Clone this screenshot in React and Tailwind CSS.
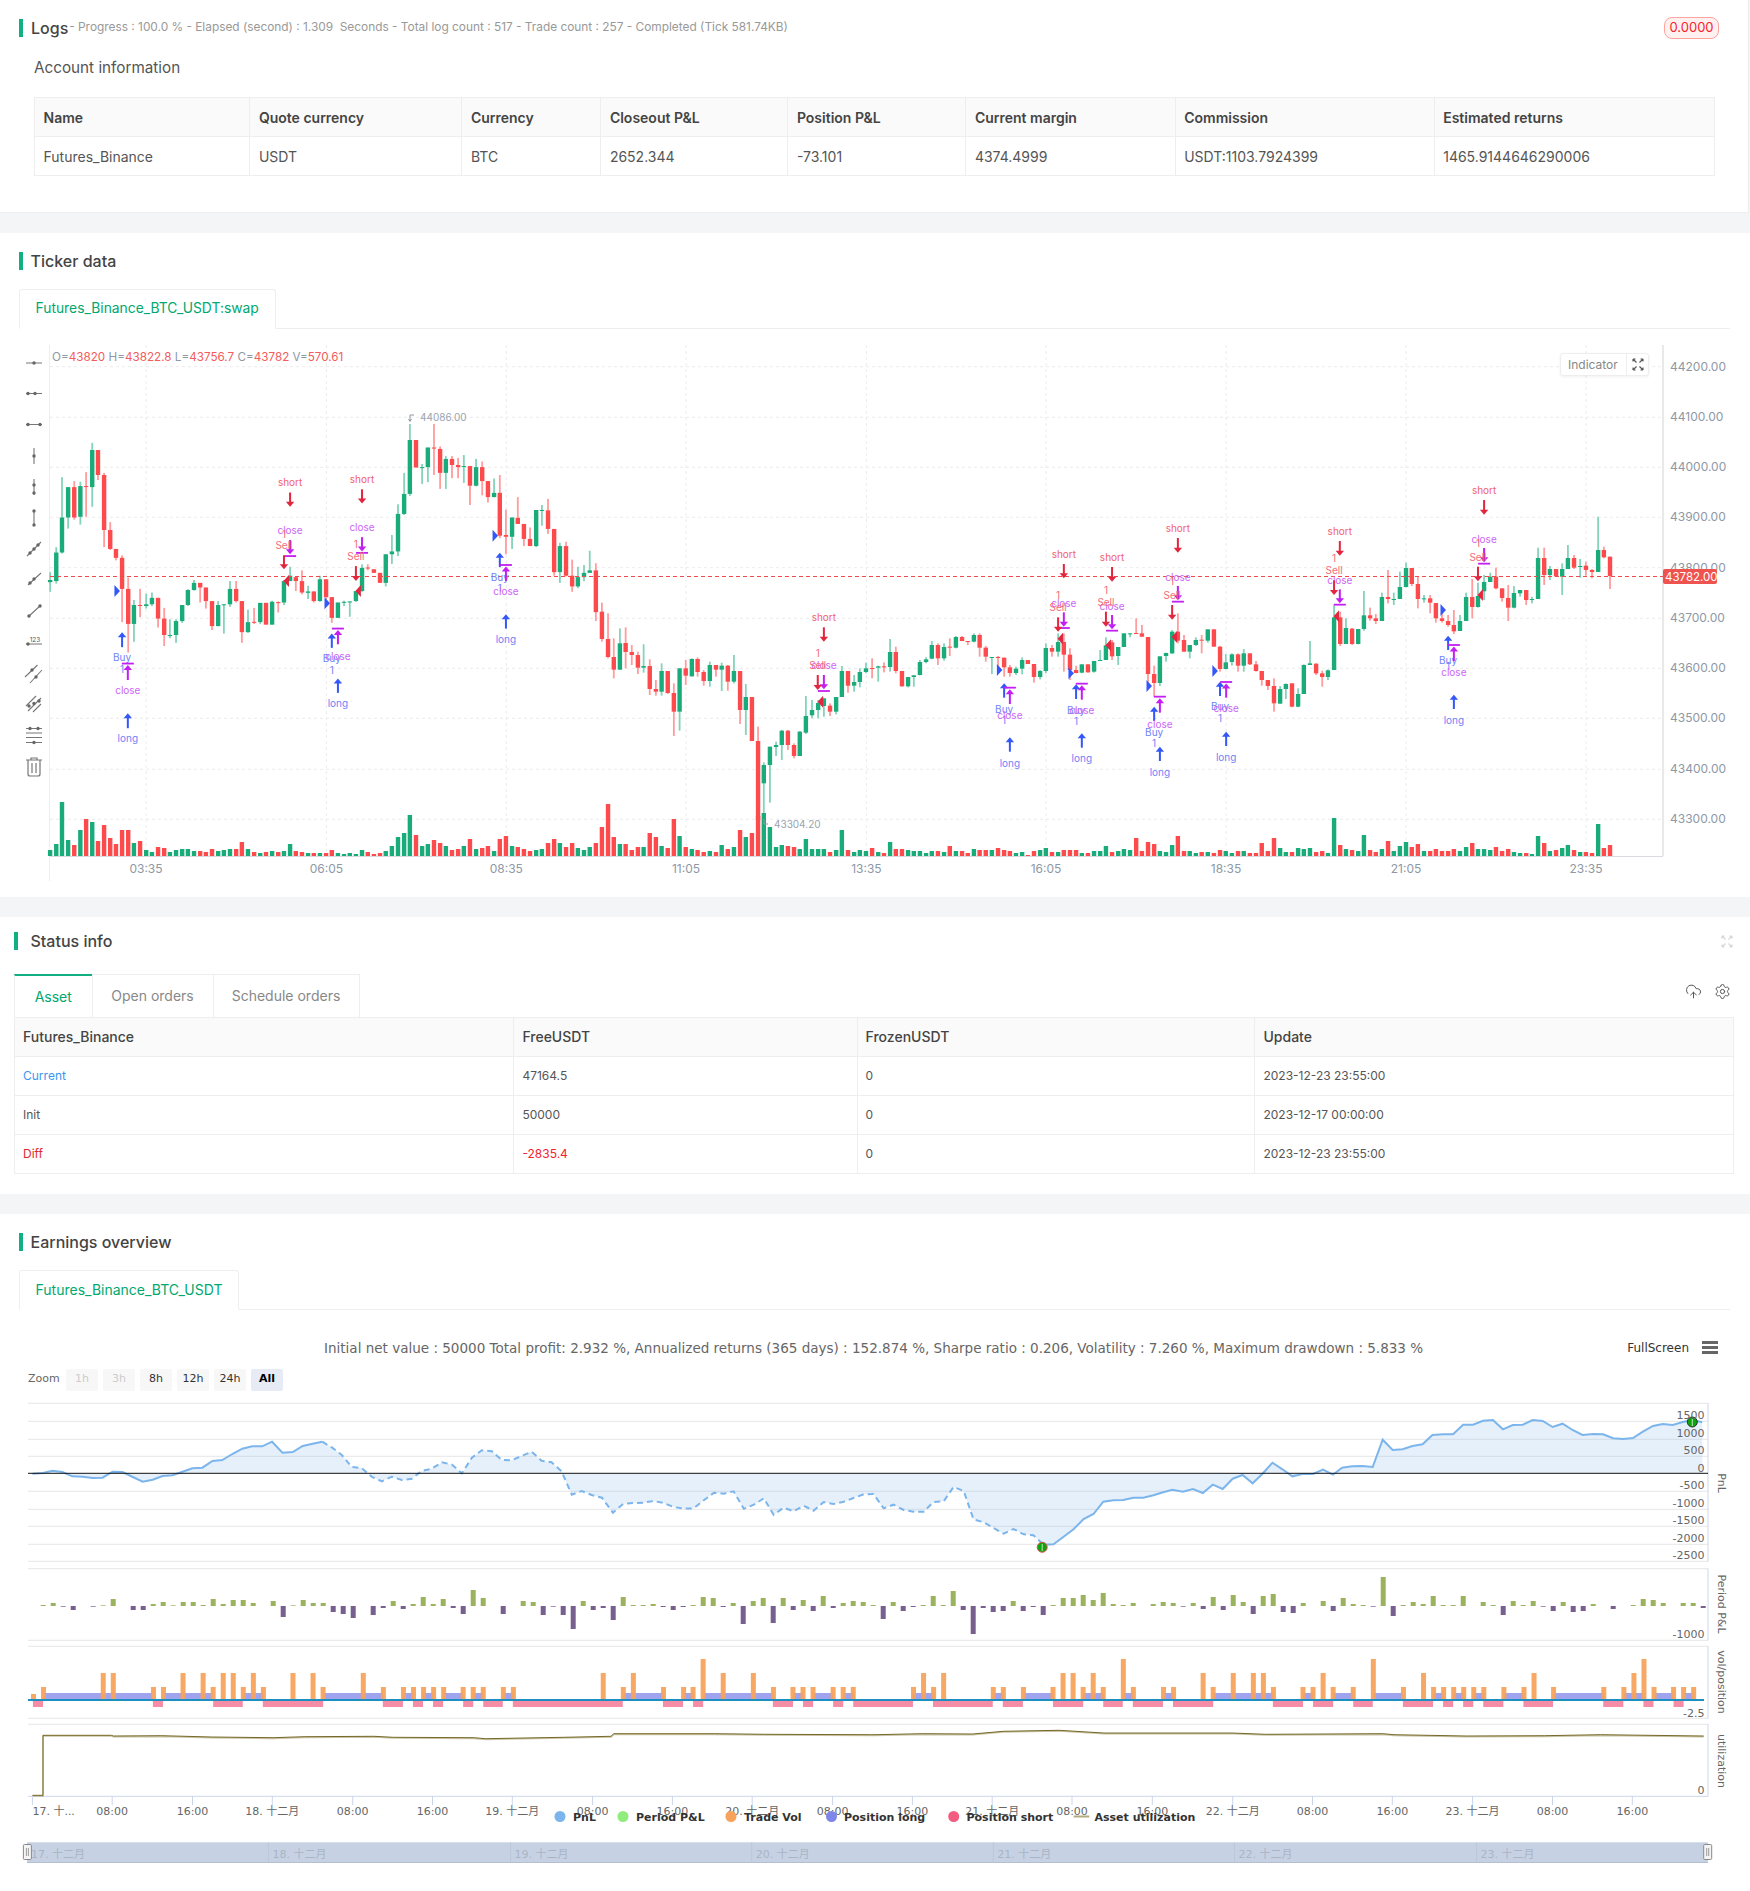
import React from 'react'
import { CloudUpload, Settings } from 'lucide-react'

// candle rows: zoomX color bodyTop bodyBottom wickTop wickBottom volumeHeight
const SEG_A = `131 g 672 678 650 705 6;147 g 595 675 580 682 12;162 g 497 595 384 598 54;178 g 412 497 412 528 16;194 r 412 497 395 503 11;210 g 409 495 397 517 26;225 r 409 411 370 495 37;241 g 308 412 288 467 34;256 r 308 378 308 392 15;272 r 378 532 372 580 31;288 r 532 585 510 588 18;303 r 585 610 585 617 12;319 r 610 697 603 790 26;335 r 697 795 665 875 26;350 g 742 795 728 845 13;366 r 742 744 697 776 15;382 g 740 745 710 752 6;397 g 722 740 707 745 4;413 r 722 780 722 805 9;429 r 780 826 750 857 8;444 g 826 829 782 835 4;460 g 787 826 782 848 6;476 g 742 787 742 792 7;491 g 700 742 698 745 7;507 g 680 700 672 702 5;523 r 680 693 680 735 5;538 r 693 731 693 752 4;554 r 731 801 731 812 7;570 g 742 801 731 802 5;585 g 740 742 740 822 6;601 g 697 740 675 747 7;617 r 697 731 675 735 7;632 r 731 818 731 848 14;648 g 790 818 755 820 7;664 r 789 791 750 795 4;680 g 736 790 736 795 3;695 r 736 797 736 797 4;711 g 733 797 730 797 5;727 r 734 736 732 763 4;742 g 675 735 672 742 5;758 g 660 675 635 675 12;773 r 664 675 664 703 5;789 r 675 707 645 712 4;805 g 704 708 688 725 3;820 r 704 731 704 735 3;836 g 670 731 660 733 3;852 r 670 720 670 745 3;867 r 720 778 720 792 6;883 g 735 778 735 778 3;899 g 733 735 730 745 2;914 g 732 734 732 775 3;930 g 703 731 703 733 2;946 g 638 703 628 705 6;961 r 637 639 628 645 4;977 r 642 652 642 652 2;993 r 652 680 652 680 3;1008 g 600 680 600 690 5;1024 g 592 600 546 627 10;1040 g 487 592 460 605 19;1056 g 431 487 372 490 23;1071 g 280 431 235 437 41;1087 r 280 357 280 357 21;1103 g 356 358 347 403 10;1118 g 301 356 301 398 12;1134 r 301 304 235 378 16;1150 r 305 372 298 417 13;1165 g 333 372 325 417 10;1181 r 333 350 325 387 6;1197 r 350 356 330 387 7;1212 g 353 355 322 400 10;1228 r 353 408 353 462 17;1244 g 356 408 333 410 7;1260 r 356 395 340 435 8;1275 r 395 440 395 455 10;1291 g 428 440 388 440 5;1306 r 428 548 378 555 17;1322 r 546 551 475 600 20;1338 g 497 551 497 585 10;1353 r 498 515 440 515 9;1369 r 515 557 515 577 7;1385 r 557 577 525 577 5;1401 g 476 577 476 580 6;1416 g 476 478 462 520 7;1432 r 477 529 445 543 13;1448 r 529 650 529 660 17;1463 g 577 650 568 680 13;1479 r 577 660 565 662 9;1495 r 660 690 615 705 13;1510 g 664 690 635 695 8;1526 g 652 664 630 675 6;1541 g 645 652 590 652 9;1557 r 645 762 625 787 13`

const SEG_B = `5 r 635 717 608 725 29;21 r 717 771 640 775 52;36 r 771 809 715 835 19;52 g 730 809 685 810 12;67 r 729 756 682 805 12;83 r 756 765 735 795 6;99 r 765 803 755 822 9;114 g 798 803 733 818 9;130 r 798 867 778 885 23;146 r 867 875 840 887 19;161 g 813 875 790 887 10;177 r 813 879 813 882 8;193 r 879 935 850 1008 37;208 g 805 935 805 992 20;224 r 805 827 780 855 9;240 g 777 829 775 830 7;255 r 777 816 772 830 6;271 r 816 843 810 857 4;287 g 795 843 785 860 5;303 r 795 809 795 830 4;318 g 797 809 788 873 11;334 r 797 845 795 872 7;350 g 813 845 765 850 9;366 r 813 930 813 972 26;381 g 891 930 852 1005 19;397 r 891 1023 891 1023 23;413 r 1023 1260 980 1262 40;428 g 1095 1150 1087 1240 43;444 g 1040 1095 1040 1208 29;460 g 1035 1041 1025 1068 9;475 g 992 1035 990 1080 11;491 r 992 1035 990 1050 10;507 r 1035 1068 1030 1075 9;522 g 995 1068 993 1068 7;538 g 948 998 888 1002 17;554 g 930 946 900 955 7;570 g 909 930 900 955 7;585 g 895 918 895 950 7;601 r 917 935 910 948 4;617 g 891 935 891 943 6;632 g 813 891 798 891 26;648 r 813 857 813 878 6;664 g 846 857 825 875 4;679 g 816 846 805 862 6;695 g 805 816 788 820 5;711 r 804 806 775 835 8;727 g 799 803 797 845 4;742 r 799 802 787 817 3;758 g 756 801 717 815 14;773 r 756 813 740 820 7;789 r 813 859 813 860 7;805 g 831 859 831 862 6;820 g 826 831 826 860 5;836 g 786 825 780 826 5;852 g 778 786 772 790 3;867 g 735 776 723 778 5;883 r 735 775 730 795 5;899 g 741 775 730 782 4;914 r 740 742 715 768 10;930 g 711 743 708 745 5;946 r 711 723 708 723 5;961 r 723 725 723 735 3;977 g 705 725 700 727 7;992 r 705 743 700 770 6;1008 r 743 770 738 785 6;1024 g 771 773 771 822 6;1040 r 771 773 768 805 8;1056 r 773 802 773 830 6;1071 r 802 819 795 830 5;1087 g 806 819 800 825 3;1103 g 780 806 772 823 4;1118 r 780 792 780 792 1;1134 r 792 831 792 848 5;1150 g 813 831 810 838 6;1165 g 744 813 730 820 8;1181 r 744 755 735 770 4;1197 g 726 755 700 770 4;1212 r 726 764 700 815 6;1228 r 764 810 745 840 6;1244 r 810 819 797 820 6;1259 g 793 818 793 820 3;1275 r 793 817 793 818 3;1291 g 783 815 783 818 5;1307 g 780 782 750 783 5;1322 g 736 780 712 780 10;1338 r 727 769 720 780 4;1354 g 741 768 741 795 5;1369 g 700 741 700 741 7;1385 g 700 702 700 712 6;1401 r 699 701 655 702 18;1416 r 700 710 675 710 5;1432 r 711 822 711 852 14;1448 r 822 849 797 890 12;1463 g 769 849 769 858 5;1479 g 759 768 758 785 4;1495 g 695 760 690 762 11;1510 r 695 722 640 730 20;1526 r 720 755 705 755 5;1541 g 735 755 735 775 5;1557 g 720 735 712 738 3`

const SEG_C = `135 r 719 721 705 760 4;151 g 688 722 688 728 4;167 r 688 740 688 740 3;183 r 740 807 738 815 6;198 g 787 807 762 808 5;214 g 763 786 760 797 3;230 r 763 797 760 815 5;245 g 760 797 747 815 5;261 r 760 793 760 795 3;277 r 793 813 783 815 3;292 r 813 840 813 857 13;308 r 840 858 840 870 5;324 r 858 910 835 935 18;340 g 867 911 858 911 8;355 g 852 867 850 897 4;371 r 850 920 850 922 4;387 g 882 920 865 922 8;402 g 795 882 793 882 7;418 g 790 795 723 795 8;434 r 791 820 790 825 4;450 r 820 831 812 860 5;465 g 811 831 808 840 3;481 g 652 810 615 810 38;497 r 652 732 635 738 11;512 g 684 732 655 732 7;528 r 686 732 684 735 6;544 g 687 732 687 733 5;559 g 646 687 573 692 21;575 r 646 655 623 662 6;590 r 655 663 642 672 4;606 g 591 663 578 663 7;622 r 591 597 510 610 15;637 g 597 599 578 615 5;653 g 561 597 515 597 10;669 g 504 561 488 562 14;684 r 504 552 504 558 9;700 r 552 597 530 625 12;716 g 595 597 585 608 5;732 r 595 608 585 640 5;747 r 609 655 609 668 7;763 r 655 663 632 668 5;779 r 663 675 645 680 5;794 r 675 694 630 702 7;810 g 663 693 645 693 5;826 g 591 663 578 663 9;842 r 591 621 537 655 13;857 g 588 621 548 623 7;873 g 546 574 525 600 7;889 g 530 546 518 546 6;904 r 530 565 503 568 9;920 r 565 594 565 605 5;936 r 594 623 555 663 7;951 g 579 623 558 625 4;967 g 570 580 570 590 3;983 r 570 600 570 615 3;998 g 597 599 590 610 2;1014 g 474 597 443 597 20;1030 r 474 525 443 555 13;1045 g 507 525 498 540 5;1061 r 507 529 507 530 6;1077 g 507 530 490 585 8;1092 g 474 507 435 507 11;1108 r 474 503 465 507 6;1124 g 498 500 477 533 4;1139 r 497 510 485 527 4;1155 r 510 516 507 535 3;1171 g 450 516 350 516 32;1186 r 450 472 440 475 8;1202 r 470 528 470 567 11`

const SCALES = {
  a: { ox: 0, sx: 2.613, oy: 340, sy: 2.8 },
  b: { ox: 600, sx: 2.613, oy: 400, sy: 3 },
  c: { ox: 1150, sx: 2.613, oy: 400, sy: 3 },
}
const px = (s, x) => SCALES[s].ox + x / SCALES[s].sx
const py = (s, y) => SCALES[s].oy + y / SCALES[s].sy

const parseCandles = (s, text) =>
  text.split(';').map((row) => {
    const p = row.trim().split(' ')
    return {
      x: px(s, +p[0]),
      up: p[1] === 'g',
      t: py(s, +p[2]),
      b: py(s, +p[3]),
      wt: py(s, +p[4]),
      wb: py(s, +p[5]),
      v: +p[6],
    }
  })

const CANDLES = [...parseCandles('a', SEG_A), ...parseCandles('b', SEG_B), ...parseCandles('c', SEG_C)]

// trade markers, in the same coordinates as the candles
const TRADES = [
  { s: 'a', buy: 319, long: 334, tri: [299, 703], buyA: [818, 860], buyT: 890, one: 923, bar: 906, closeA: 952, closeT: 982, longA: [1045, 1087], longT: 1117 },
  { s: 'a', buy: 867, long: 883, tri: [848, 737], buyA: [822, 862], buyT: 893, one: 925, bar: 808, closeA: 852, closeT: 885, longA: [948, 988], longT: 1019 },
  { s: 'a', buy: 1306, long: 1322, tri: [1287, 548], buyA: [596, 636], buyT: 665, one: 697, bar: 630, closeA: 675, closeT: 705, longA: [768, 808], longT: 839 },
  { s: 'b', buy: 1056, long: 1071, tri: [1037, 810], buyA: [850, 893], buyT: 927, one: 962, bar: 863, closeA: 912, closeT: 945, longA: [1012, 1055], longT: 1089 },
  { s: 'b', buy: 1244, long: 1259, tri: [1224, 820], buyA: [853, 897], buyT: 930, one: 964, bar: 851, closeA: 899, closeT: 932, longA: [1000, 1043], longT: 1076 },
  { s: 'b', buy: 1448, long: 1463, tri: [1428, 858], buyA: [920, 963], buyT: 996, one: 1031, bar: 890, closeA: 938, closeT: 972, longA: [1040, 1083], longT: 1116 },
  { s: 'c', buy: 183, long: 199, tri: [163, 813], buyA: [845, 888], buyT: 920, one: 956, bar: 846, closeA: 893, closeT: 926, longA: [995, 1038], longT: 1071 },
  { s: 'c', buy: 779, long: 794, tri: [759, 630], buyA: [707, 750], buyT: 782, one: 800, bar: 735, closeA: 783, closeT: 816, longA: [884, 927], longT: 960 },
]

const SHORTS = [
  { s: 'a', sell: 742, short: 758, tri: [755, 675], shortT: 400, shortA: [427, 467], closeT: 534, closeA: [560, 600], bar: 605, sellT: 575, one: 545, sellA: [603, 642] },
  { s: 'a', sell: 930, short: 946, tri: [943, 703], shortT: 391, shortA: [418, 458], closeT: 526, closeA: [552, 592], bar: 596, sellT: 606, one: 572, sellA: [633, 675] },
  { s: 'b', sell: 569, short: 585, tri: [583, 905], shortT: 653, shortA: [682, 725], closeT: 797, closeA: [825, 868], bar: 873, sellT: 797, one: 761, sellA: [825, 870] },
  { s: 'b', sell: 1197, short: 1212, tri: [1210, 716], shortT: 464, shortA: [492, 535], closeT: 609, closeA: [637, 680], bar: 684, sellT: 623, one: 585, sellA: [652, 695] },
  { s: 'b', sell: 1322, short: 1338, tri: [1335, 736], shortT: 473, shortA: [501, 545], closeT: 618, closeA: [645, 688], bar: 692, sellT: 607, one: 571, sellA: [635, 680] },
  { s: 'b', sell: 1495, short: 1510, tri: [1508, 711], shortT: 386, shortA: [414, 458], closeT: 531, closeA: [558, 601], bar: 605, sellT: 587, one: 545, sellA: [615, 659] },
  { s: 'c', sell: 481, short: 496, tri: [494, 649], shortT: 395, shortA: [423, 467], closeT: 540, closeA: [568, 610], bar: 614, sellT: 512, one: 476, sellA: [541, 585] },
  { s: 'c', sell: 857, short: 873, tri: [870, 585], shortT: 272, shortA: [300, 344], closeT: 417, closeA: [444, 487], bar: 491, sellT: 473, one: 430, sellA: [500, 544] },
]

const RED = '#e3263f'
const PURPLE = '#c41ff2'
const BLUE = '#3357f8'

const Arrow = ({ x, y0, y1, up, color }) => {
  const tip = up ? y0 : y1
  const head = up ? tip + 5 : tip - 5
  return (
    <g>
      <rect x={x - 1} y={y0 + (up ? 3 : 0)} width={2} height={y1 - y0 - 3} fill={color} />
      <path d={`M${x} ${tip}L${x + 4.2} ${head}L${x - 4.2} ${head}Z`} fill={color} />
    </g>
  )
}

const Label = ({ x, y, fill, children }) => (
  <text x={x} y={y + 3.5} textAnchor="middle" fontSize="10" fill={fill}>
    {children}
  </text>
)

const TradeMarks = () => (
  <g>
    {TRADES.map((t, i) => {
      const X = (v) => px(t.s, v)
      const Y = (v) => py(t.s, v)
      const tx = X(t.tri[0])
      const ty = Y(t.tri[1])
      return (
        <g key={i}>
          <path d={`M${tx} ${ty - 6}L${tx + 5.5} ${ty}L${tx} ${ty + 6}Z`} fill={BLUE} />
          <Arrow x={X(t.buy)} y0={Y(t.buyA[0])} y1={Y(t.buyA[1])} up color={BLUE} />
          <Label x={X(t.buy)} y={Y(t.buyT)} fill="#6f83f9">Buy</Label>
          <Label x={X(t.buy)} y={Y(t.one)} fill="#6f83f9">1</Label>
          <rect x={X(t.long) - 6} y={Y(t.bar) - 0.9} width={12} height={1.8} fill={PURPLE} />
          <Arrow x={X(t.long)} y0={Y(t.bar) + 1.5} y1={Y(t.closeA)} up color={PURPLE} />
          <Label x={X(t.long)} y={Y(t.closeT)} fill="#cc66f6">close</Label>
          <Arrow x={X(t.long)} y0={Y(t.longA[0])} y1={Y(t.longA[1])} up color={BLUE} />
          <Label x={X(t.long)} y={Y(t.longT)} fill="#6f83f9">long</Label>
        </g>
      )
    })}
    {SHORTS.map((t, i) => {
      const X = (v) => px(t.s, v)
      const Y = (v) => py(t.s, v)
      const tx = X(t.tri[0])
      const ty = Y(t.tri[1])
      return (
        <g key={i}>
          <path d={`M${tx} ${ty - 6}L${tx - 5.5} ${ty}L${tx} ${ty + 6}Z`} fill={RED} />
          <Label x={X(t.short)} y={Y(t.shortT)} fill="#f2616f">short</Label>
          <Arrow x={X(t.short)} y0={Y(t.shortA[0])} y1={Y(t.shortA[1])} color={RED} />
          <Label x={X(t.short)} y={Y(t.closeT)} fill="#cc66f6">close</Label>
          <Arrow x={X(t.short)} y0={Y(t.closeA[0])} y1={Y(t.closeA[1])} color={PURPLE} />
          <rect x={X(t.short) - 6} y={Y(t.bar) - 0.9} width={12} height={1.8} fill={PURPLE} />
          <Label x={X(t.sell)} y={Y(t.sellT)} fill="#f66c78">Sell</Label>
          <Label x={X(t.sell)} y={Y(t.one)} fill="#f66c78">1</Label>
          <Arrow x={X(t.sell)} y0={Y(t.sellA[0])} y1={Y(t.sellA[1])} color={RED} />
        </g>
      )
    })}
  </g>
)

const PRICES = ['44200.00', '44100.00', '44000.00', '43900.00', '43800.00', '43700.00', '43600.00', '43500.00', '43400.00', '43300.00']
const PRICE_Y = [366.7, 417.3, 467.3, 517.3, 567.7, 618.3, 668.3, 718.3, 769.3, 819.3]
const TIMES = [[146, '03:35'], [326.4, '06:05'], [506.3, '08:35'], [686, '11:05'], [866.4, '13:35'], [1046, '16:05'], [1226, '18:35'], [1406, '21:05'], [1586, '23:35']]

const Dot = ({ x, y }) => <circle cx={x} cy={y} r="1.7" fill="#666" />

// drawing tools down the left side of the candle chart
const ToolBar = () => (
  <g stroke="#777" strokeWidth="1.1" fill="none">
    <path d="M26 363H42M26 393.5H42M26 424.5H42M34 448V464M34 479V495M34 510V526" />
    <path d="M27 556L41 542M28 585L41 573M28 617L41 605" />
    <path d="M25 677L37.5 665M30 683L42 670" />
    <path d="M26 706L36 696M28 711L41 698M33 712L41 704" />
    <path d="M26 644H42M26 728.5H42M26 733H42M26 737.5H42M26 742.5H42" />
    <g stroke="none">
      <Dot x={34} y={363} />
      <Dot x={28} y={393.5} />
      <Dot x={35} y={393.5} />
      <Dot x={28} y={424.5} />
      <Dot x={40} y={424.5} />
      <Dot x={34} y={456} />
      <Dot x={34} y={485} />
      <Dot x={34} y={493} />
      <Dot x={34} y={511} />
      <Dot x={34} y={525} />
      <Dot x={34} y={549} />
      <Dot x={30} y={553} />
      <Dot x={38} y={545} />
      <Dot x={34} y={579} />
      <Dot x={30} y={583} />
      <Dot x={29} y={616} />
      <Dot x={40} y={606} />
      <Dot x={28} y={644} />
      <Dot x={32} y={670} />
      <Dot x={36} y={677} />
      <Dot x={29} y={706} />
      <Dot x={34} y={703.5} />
      <Dot x={39} y={701} />
      <Dot x={30} y={728.5} />
      <Dot x={38} y={728.5} />
      <Dot x={34} y={742.5} />
    </g>
    <text x="35" y="642" fontSize="6.5" textAnchor="middle" fill="#555" stroke="none">123</text>
    <path d="M26 760H42M31 760V758H37V760M28 760V774Q28 776 30 776H38Q40 776 40 774V760M32 763V773M36 763V773" strokeWidth="1.2" />
  </g>
)

const CandleChart = () => (
  <svg width="1750" height="557" viewBox="0 340 1750 557" className="block font-['Inter',sans-serif]">
    <g stroke="#ececec" strokeDasharray="3 3" strokeWidth="1">
      {PRICE_Y.map((y) => <line key={y} x1="50" x2="1663" y1={y} y2={y} />)}
      {TIMES.map(([x]) => <line key={x} x1={x} x2={x} y1="345" y2="856" />)}
    </g>
    <line x1="49.5" x2="49.5" y1="345" y2="881" stroke="#eeeeee" />
    <line x1="1663" x2="1663" y1="345" y2="856" stroke="#d0d3d8" />
    <line x1="50" x2="1663" y1="856.5" y2="856.5" stroke="#d8dbe0" />
    <ToolBar />
    {CANDLES.map((c, i) => {
      const body = c.up ? '#1aab7b' : '#fd4a4c'
      const wick = c.up ? '#85d3b8' : '#ff9c9e'
      return (
        <g key={i}>
          <rect x={c.x - 0.9} y={c.wt} width="1.8" height={Math.max(c.wb - c.wt, 1)} fill={wick} />
          <rect x={c.x - 2.2} y={c.t} width="4.4" height={Math.max(c.b - c.t, 1)} fill={body} />
          <rect x={c.x - 2.2} y={856 - c.v} width="4.4" height={c.v} fill={body} />
        </g>
      )
    })}
    <line x1="50" x2="1663" y1="576.5" y2="576.5" stroke="#f04a4a" strokeDasharray="4 3" />
    <TradeMarks />
    <text x="52" y="361" fontSize="11.7" fill="#8e98a6">
      O=<tspan fill="#f45b5b">43820</tspan> H=<tspan fill="#f45b5b">43822.8</tspan> L=<tspan fill="#f45b5b">43756.7</tspan> C=<tspan fill="#f45b5b">43782</tspan> V=<tspan fill="#f45b5b">570.61</tspan>
    </text>
    <path d="M414 415H410V421M408.5 419L410 421.5L411.5 419" fill="none" stroke="#8e98a6" />
    <text x="420" y="421" fontSize="10" fill="#9aa3af">44086.00</text>
    <path d="M768 824H764V819" fill="none" stroke="#8e98a6" />
    <text x="774" y="828" fontSize="10" fill="#9aa3af">43304.20</text>
    {PRICES.map((p, i) => (
      <text key={p} x="1670" y={PRICE_Y[i] + 4} fontSize="12" fill="#8e98a6">{p}</text>
    ))}
    <rect x="1663" y="569" width="54" height="15" rx="2" fill="#ef5350" />
    <text x="1665" y="580.5" fontSize="11.5" fill="#fff">43782.00</text>
    {TIMES.map(([x, t]) => (
      <text key={t} x={x} y="873" fontSize="12" textAnchor="middle" fill="#8e98a6">{t}</text>
    ))}
  </svg>
)

const PERIOD = [
  1, 3, -0.5, -4, 0, -0.7, 0.7, 7, 0, -4, -4, 2, 4, 0.7, 4, 4, 1, 7, 2, 6, 6, 3, 0, 5, -11, 0.7, 6, 3, 3, -6, -8, -12, 0, -9, -2, 5, -3, 2, 9, 2, 7, -2, -8, 16, 8, 0, -8, 0, 5, 4, -9, -0.7, -9, -23, 5,
  -4, -2, -14, 9, 1, 1, 2, -1, -4, -1, 1, 9, 8, -1, 3, -18, 5, 8, -17, 8, -4, 6, -5, 10, -2, 3, 5, 4, 1, -13, 4, -5, -1, 1, 10, 1, 15, -4, -28, -2, -6, -5, 5, -5, -1, -9, 1, 8, 8, 11, 6, 13, 2, 1, 3, 0,
  2, 4, 3, -0.5, 3, -3, 9, -4, 11, 4, -8, 10, 12, -6, -7, 3, 0, 5, -5, 8, 2, 1, -0.5, 29, -10, 1, 4, 2, 10, 1, 1, 10, 0, 4, 1, -9, 5, 1, 5, -0.5, -5, 4, -6, -5, 2, 0, -3, 0, 1, 7, 6, 3, 0, 3, 3, -2,
]

const toA = (pts) => pts.map(([x, y]) => [x / 2.613, 1320 + y / 3])
const toB = (pts) => pts.map(([x, y]) => [590 + x / 2.751, 1400 + y / 3])
const toC = (pts) => pts.map(([x, y]) => [1150 + x / 2.613, 1320 + y / 3])

const PNL_HEAD = toA([[85, 458], [112, 456], [137, 449], [163, 453], [189, 466], [216, 467], [242, 471], [268, 470], [294, 452], [320, 453], [347, 468], [373, 482], [399, 476], [425, 465], [451, 463], [477, 452], [503, 442], [529, 440], [555, 420], [581, 417], [607, 399], [633, 383], [659, 376], [685, 376], [711, 362], [738, 395], [765, 393], [791, 375], [817, 368], [842, 362]])
const PNL_DASH = [
  ...toA([[842, 362], [868, 380], [893, 402], [919, 438], [945, 441], [972, 468], [998, 481], [1024, 467], [1050, 477], [1076, 473], [1102, 450], [1128, 443], [1155, 424], [1181, 431], [1207, 457], [1233, 410], [1259, 388], [1285, 391], [1311, 417], [1337, 418], [1363, 405], [1389, 392], [1415, 419], [1441, 424], [1467, 450], [1494, 521], [1520, 510], [1546, 522]]),
  ...toB([[33, 290], [63, 335], [92, 308], [120, 306], [147, 305], [175, 300], [203, 306], [230, 318], [258, 323], [285, 322], [313, 298], [341, 275], [368, 278], [395, 271], [423, 323], [451, 311], [478, 292], [505, 341], [533, 320], [560, 331], [588, 314], [615, 329], [643, 303], [670, 309], [698, 302], [725, 291], [753, 280], [780, 279], [808, 322], [835, 311], [863, 327], [890, 332], [918, 332], [945, 303], [973, 301], [1000, 258], [1028, 270], [1055, 355], [1083, 364], [1110, 381], [1138, 398], [1165, 384], [1193, 400], [1220, 403], [1248, 431]]),
]
const PNL_TAIL = [
  ...toB([[1248, 431], [1275, 430], [1303, 407], [1330, 385], [1358, 354], [1385, 339], [1412, 302], [1440, 298], [1467, 297], [1495, 290], [1522, 290], [1550, 283]]),
  ...toC([[30, 515], [58, 506], [86, 512], [112, 504], [138, 516], [164, 491], [190, 504], [216, 473], [242, 462], [268, 487], [294, 458], [320, 425], [346, 445], [372, 466], [398, 459], [426, 459], [452, 446], [478, 461], [502, 440], [528, 436], [555, 435], [582, 438], [608, 356], [634, 387], [660, 385], [686, 375], [712, 370], [738, 342], [766, 340], [792, 340], [818, 311], [844, 311], [870, 299], [896, 297], [922, 325], [948, 312], [974, 311], [1000, 297], [1026, 300], [1052, 318], [1078, 308], [1104, 327], [1130, 342], [1158, 339], [1184, 340], [1210, 352], [1236, 354], [1262, 351], [1288, 332], [1314, 315], [1340, 309], [1366, 312], [1392, 303], [1418, 297], [1443, 304]]),
]
const line = (pts) => pts.map(([x, y], i) => `${i ? 'L' : 'M'}${x.toFixed(1)} ${y.toFixed(1)}`).join('')
const PNL_ALL = [...PNL_HEAD, ...PNL_DASH.slice(1), ...PNL_TAIL.slice(1)]

const VOL_A = [[60, 6], [78, 13], [185, 27], [203, 27], [275, 13], [293, 13], [328, 27], [364, 27], [382, 13], [400, 27], [418, 27], [436, 13], [454, 27], [472, 13], [525, 27], [561, 27], [579, 13], [651, 27], [687, 13], [723, 13], [741, 13], [759, 13], [777, 13], [795, 13], [830, 13], [848, 13], [866, 13], [902, 13], [920, 13], [1081, 27], [1117, 13], [1135, 27], [1189, 13], [1225, 13], [1242, 13], [1260, 41], [1296, 27], [1350, 27], [1386, 13], [1421, 13], [1439, 13], [1457, 13], [1493, 13], [1511, 13], [1529, 13]]
const VOL_B = [[69, 13], [87, 27], [105, 13], [123, 27], [212, 13], [230, 13], [266, 13], [319, 13], [337, 27], [355, 27], [373, 13], [391, 27], [409, 13], [445, 41], [463, 13], [517, 13], [535, 13], [588, 27], [606, 13], [642, 27], [678, 27], [696, 27], [714, 13], [767, 13], [785, 13], [803, 27], [821, 13], [857, 13], [893, 41], [947, 13], [983, 27], [1001, 13], [1019, 13], [1037, 13], [1055, 13], [1073, 13], [1091, 13], [1127, 13], [1163, 13], [1181, 27], [1216, 13], [1306, 13], [1342, 13], [1360, 27], [1378, 41], [1396, 13], [1431, 13], [1449, 13], [1467, 13]]
const LONG_A = [[78, 273], [293, 381], [436, 472], [580, 687], [722, 741], [758, 777], [795, 830], [848, 866], [902, 920], [1117, 1189], [1225, 1243], [1261, 1386], [1421, 1439], [1457, 1493], [1511, 1530]]
const LONG_B = [[67, 105], [212, 230], [266, 320], [373, 410], [445, 463], [517, 535], [606, 714], [767, 785], [821, 857], [893, 947], [1001, 1019], [1037, 1055], [1073, 1091], [1127, 1163], [1216, 1306], [1342, 1378], [1396, 1431], [1449, 1467]]
const SHORT_A = [[59, 77], [274, 292], [382, 435], [471, 579], [686, 722], [740, 758], [776, 794], [830, 848], [866, 901], [919, 1116], [1188, 1224], [1242, 1260], [1385, 1421], [1439, 1457], [1493, 1511], [1529, 1568]]
const SHORT_B = [[0, 68], [104, 211], [229, 265], [319, 373], [409, 444], [462, 516], [534, 606], [713, 767], [785, 821], [857, 892], [946, 1000], [1018, 1036], [1054, 1072], [1090, 1126], [1162, 1215], [1305, 1341], [1377, 1395], [1431, 1449]]
const bx = (z) => z / 1.792
const cx = (z) => 875 + z / 1.792
const ASSET = [
  ...[[58, 583], [77, 583], [77, 403], [200, 403], [203, 405], [290, 404], [380, 408], [490, 410], [545, 407], [670, 406], [705, 409], [850, 410], [870, 413], [1010, 409], [1095, 406], [1100, 398], [1280, 398], [1330, 399], [1370, 400], [1560, 401]].map(([x, y]) => [bx(x), 1600 + y / 3]),
  ...[[0, 401], [85, 398], [175, 399], [230, 391], [330, 388], [410, 396], [640, 396], [700, 400], [910, 398], [930, 401], [1060, 405], [1200, 404], [1300, 401], [1485, 405]].map(([x, y]) => [cx(x), 1600 + y / 3]),
]

const TICK_LABELS = ['17. 十...', '08:00', '16:00', '18. 十二月', '08:00', '16:00', '19. 十二月', '08:00', '16:00', '20. 十二月', '08:00', '16:00', '21. 十二月', '08:00', '16:00', '22. 十二月', '08:00', '16:00', '23. 十二月', '08:00', '16:00']
const TICKS = [32.4, 112.2, 192.5, 272.3, 352.7, 432.5, 512.3, 592.6, 672.4, 752.2, 832.6, 912.4, 992.2, 1072, 1152.3, 1232.7, 1312.5, 1392.3, 1472.6, 1552.5, 1632.3]
const PNL_GRID = [1402.3, 1420.3, 1438.3, 1455.3, 1490.3, 1508.3, 1525.3, 1543.3, 1560.3]
const PNL_LABELS = [[1414, '1500'], [1432, '1000'], [1449, '500'], [1467, '0'], [1484, '-500'], [1502, '-1000'], [1519, '-1500'], [1537, '-2000'], [1554, '-2500']]
const NAV = [[27, '17. 十二月'], [268.4, '18. 十二月'], [510.6, '19. 十二月'], [751.7, '20. 十二月'], [993.3, '21. 十二月'], [1234.4, '22. 十二月'], [1476.6, '23. 十二月']]
const LEGEND = [
  [560, 573, '#7cb5ec', 'PnL'],
  [623, 636, '#90ed7d', 'Period P&L'],
  [731, 744, '#f7a35c', 'Trade Vol'],
  [831.5, 844, '#8085e9', 'Position long'],
  [953.7, 966.5, '#f15c80', 'Position short'],
]

const AxisTitle = ({ x, y, children }) => (
  <text x={x} y={y} fontSize="11" fill="#666" textAnchor="middle" transform={`rotate(90 ${x} ${y})`}>
    {children}
  </text>
)

const EarningsChart = () => (
  <svg width="1750" height="501" viewBox="0 1390 1750 501" className="block font-['DejaVu_Sans','Noto_Sans_CJK_SC',sans-serif]">
    <g stroke="#e6e6e6">
      {PNL_GRID.map((y) => <line key={y} x1="28" x2="1708" y1={y} y2={y} />)}
      <line x1="28" x2="1708" y1="1567.7" y2="1567.7" />
      <line x1="28" x2="1708" y1="1639.3" y2="1639.3" />
      <line x1="28" x2="1708" y1="1645.3" y2="1645.3" />
      <line x1="28" x2="1708" y1="1717.3" y2="1717.3" />
      <line x1="28" x2="1708" y1="1723.3" y2="1723.3" />
    </g>
    <g stroke="#ccd6eb">
      <line x1="1708" x2="1708" y1="1402" y2="1560.5" />
      <line x1="1708" x2="1708" y1="1567.5" y2="1639.5" />
      <line x1="1708" x2="1708" y1="1645" y2="1717.5" />
      <line x1="1708" x2="1708" y1="1723" y2="1795.5" />
      <line x1="28" x2="1708" y1="1795.3" y2="1795.3" />
    </g>
    <path d={`${line(PNL_ALL)}L${PNL_ALL[PNL_ALL.length - 1][0]} 1472.3L${PNL_ALL[0][0]} 1472.3Z`} fill="#7cb5ec" fillOpacity="0.2" />
    <path d={line(PNL_HEAD)} fill="none" stroke="#7cb5ec" strokeWidth="2" />
    <path d={line(PNL_DASH)} fill="none" stroke="#7cb5ec" strokeWidth="2" strokeDasharray="6 4" />
    <path d={line(PNL_TAIL)} fill="none" stroke="#7cb5ec" strokeWidth="2" />
    <line x1="28" x2="1708" y1="1472.3" y2="1472.3" stroke="#111" strokeWidth="1" />
    <circle cx="1692.3" cy="1421" r="5" fill="#0da50d" stroke="#333" />
    <line x1="1692.3" x2="1692.3" y1="1418" y2="1425" stroke="#bfe8bf" />
    <circle cx="1042.2" cy="1546.3" r="5" fill="#0da50d" stroke="#f04b4b" />
    <line x1="1042.2" x2="1042.2" y1="1543" y2="1550" stroke="#bfe8bf" />
    {PNL_LABELS.map(([y, t]) => (
      <text key={t} x="1704.5" y={y + 4} fontSize="11" textAnchor="end" fill="#666">{t}</text>
    ))}
    {PERIOD.map((v, k) =>
      v === 0 ? null : (
        <rect
          key={k}
          x={40.7 + 10 * k}
          y={v > 0 ? 1605 - Math.max(v, 0.7) : 1605}
          width="5"
          height={Math.max(Math.abs(v), 0.7)}
          fill={v > 0 ? '#9bb35e' : '#775f90'}
        />
      ),
    )}
    <text x="1704.5" y="1637" fontSize="11" textAnchor="end" fill="#666">-1000</text>
    {[...LONG_A.map(([a, b]) => [bx(a), bx(b)]), ...LONG_B.map(([a, b]) => [cx(a), cx(b)])].map(([a, b]) => (
      <rect key={a} x={a} y="1692" width={b - a} height="7" fill="#8085e9" fillOpacity="0.75" />
    ))}
    {[...SHORT_A.map(([a, b]) => [bx(a), bx(b)]), ...SHORT_B.map(([a, b]) => [cx(a), cx(b)])].map(([a, b]) => (
      <rect key={a} x={a} y="1699.5" width={b - a} height="6.5" fill="#f15c80" fillOpacity="0.7" />
    ))}
    {[...VOL_A.map(([x, h]) => [bx(x), h]), ...VOL_B.map(([x, h]) => [cx(x), h])].map(([x, h]) => (
      <rect key={x} x={x - 2.5} y={1699 - h} width="5" height={h} fill="#f7a35c" fillOpacity="0.95" />
    ))}
    <line x1="28" x2="1704" y1="1699" y2="1699" stroke="#1c8fc2" strokeWidth="2" />
    <text x="1704.5" y="1716" fontSize="11" textAnchor="end" fill="#666">-2.5</text>
    <path d={line(ASSET)} transform="translate(0 0.8)" fill="none" stroke="#b2ab82" strokeWidth="1.5" strokeOpacity="0.7" />
    <path d={line(ASSET)} fill="none" stroke="#6a5a14" strokeWidth="0.9" />
    <text x="1704.5" y="1793" fontSize="11" textAnchor="end" fill="#666">0</text>
    <AxisTitle x="1718" y="1482">PnL</AxisTitle>
    <AxisTitle x="1718" y="1603">Period P&amp;L</AxisTitle>
    <AxisTitle x="1718" y="1681">vol/position</AxisTitle>
    <AxisTitle x="1718" y="1760">utilization</AxisTitle>
    {TICKS.map((x, i) => (
      <g key={x}>
        <line x1={x} x2={x} y1="1795" y2="1804" stroke="#ccd6eb" />
        <text x={x} y="1813.5" fontSize="11" textAnchor={i === 0 ? 'start' : 'middle'} fill="#666">{TICK_LABELS[i]}</text>
      </g>
    ))}
    {LEGEND.map(([dot, tx, color, name]) => (
      <g key={name}>
        <circle cx={dot} cy="1815.5" r="5.5" fill={color} />
        <text x={tx} y="1819.5" fontSize="11" fontWeight="700" fill="#333">{name}</text>
      </g>
    ))}
    <line x1="1073.7" x2="1089.3" y1="1815.5" y2="1815.5" stroke="#b2ab82" strokeWidth="2" />
    <text x="1094.5" y="1819.5" fontSize="11" fontWeight="700" fill="#333">Asset utilization</text>
    <rect x="27" y="1841.3" width="1681" height="20" fill="#c6d2e3" />
    <line x1="27" x2="1708" y1="1861.5" y2="1861.5" stroke="#b5bfd0" />
    {NAV.map(([x, t]) => (
      <g key={t}>
        {x > 30 && <line x1={x} x2={x} y1="1841.3" y2="1861.3" stroke="#bcc8da" />}
        <text x={x + 4} y="1857" fontSize="11" fill="#a9b4c6">{t}</text>
      </g>
    ))}
    {[23.4, 1703.7].map((x) => (
      <g key={x}>
        <rect x={x} y="1843.5" width="8" height="15" rx="1" fill="#f4f4f4" stroke="#888" />
        <path d={`M${x + 3} 1847V1855M${x + 5} 1847V1855`} stroke="#888" strokeWidth="0.8" />
      </g>
    ))}
  </svg>
)

const ExpandIcon = ({ color = '#555' }) => (
  <svg width="12" height="13" viewBox="0 0 12 13" fill="none" stroke={color} strokeWidth="1.1">
    <path d="M1 1L4.5 4.5M1 1H3.5M1 1V3.5M11 1L7.5 4.5M11 1H8.5M11 1V3.5M1 12L4.5 8.5M1 12H3.5M1 12V9.5M11 12L7.5 8.5M11 12H8.5M11 12V9.5" />
  </svg>
)

const SectionTitle = ({ children, left = 'pl-[18.5px]', gap = 'gap-[8px]' }) => (
  <div className={`flex items-center ${gap} ${left}`}>
    <span className="w-[4px] h-[18px] bg-[#10b083]" />
    <h2 className="text-[16px] font-medium leading-[18px] text-[#444]">{children}</h2>
  </div>
)

const CardTab = ({ children, width, size = 'text-[14px]' }) => (
  <div className="ml-[18.5px] mt-[19px] mr-[20px] border-b border-[#eeeeee] h-[39.5px]">
    <div className={`${width} ${size} h-[39.5px] border border-b-white border-[#eeeeee] rounded-t-[3px] bg-white flex items-center pl-[16px] text-[#00a870]`}>
      {children}
    </div>
  </div>
)

const ACCOUNT_COLS = ['w-[215.4px]', 'w-[212px]', 'w-[139px]', 'w-[187px]', 'w-[178px]', 'w-[209.3px]', 'w-[259px]', 'w-[280.4px]']
const ACCOUNT_HEAD = ['Name', 'Quote currency', 'Currency', 'Closeout P&L', 'Position P&L', 'Current margin', 'Commission', 'Estimated returns']
const ACCOUNT_ROW = ['Futures_Binance', 'USDT', 'BTC', '2652.344', '-73.101', '4374.4999', 'USDT:1103.7924399', '1465.9144646290006']

const STATUS_COLS = ['w-[499.4px]', 'w-[343.2px]', 'w-[397.9px]', 'w-[478.5px]']
const STATUS_ROWS = [
  ['Current', '47164.5', '0', '2023-12-23 23:55:00'],
  ['Init', '50000', '0', '2023-12-17 00:00:00'],
  ['Diff', '-2835.4', '0', '2023-12-23 23:55:00'],
]

const ZOOMS = [['1h', true], ['3h', true], ['8h'], ['12h'], ['24h']]

const App = () => (
  <div className="w-[1750px] h-[1891px] bg-[#f4f5f7] font-['Inter',sans-serif] text-[#555]">
    {/* Logs */}
    <section className="h-[212.5px] w-[1749px] bg-white border-b border-r border-[#eeeeee] pt-[17px]">
      <div className="flex items-center h-[22px] pl-[19px] pr-[29px]">
        <span className="w-[4px] h-[18px] bg-[#10b083] mr-[8px]" />
        <span className="text-[16px] font-medium text-[#444]">Logs</span>
        <span className="text-[11.86px] text-[#999] ml-[1px] whitespace-pre">- Progress : 100.0 % - Elapsed (second) : 1.309  Seconds - Total log count : 517 - Trade count : 257 - Completed (Tick 581.74KB)</span>
        <span className="ml-auto w-[55px] h-[22px] flex items-center justify-center rounded-[8px] border border-[#ffa39e] bg-[#fff1f0] text-[13px] text-[#f5222d]">0.0000</span>
      </div>
      <h3 className="ml-[34px] mt-[17px] text-[15.25px] leading-[24px] text-[#555]">Account information</h3>
      <table className="ml-[34px] mt-[17px] w-[1680px] table-fixed border-collapse text-[14px]">
        <colgroup>
          {ACCOUNT_COLS.map((c) => <col key={c} className={c} />)}
        </colgroup>
        <thead>
          <tr className="h-[39px] bg-[#fafafa]">
            {ACCOUNT_HEAD.map((h) => (
              <th key={h} className="border border-[#eeeeee] px-[8.5px] text-left font-semibold text-[#444]">{h}</th>
            ))}
          </tr>
        </thead>
        <tbody>
          <tr className="h-[39px]">
            {ACCOUNT_ROW.map((c) => (
              <td key={c} className="border border-[#eeeeee] px-[8.5px]">{c}</td>
            ))}
          </tr>
        </tbody>
      </table>
    </section>

    {/* Ticker data */}
    <section className="mt-[20.5px] h-[664px] bg-white relative">
      <div className="pt-[19px]"><SectionTitle>Ticker data</SectionTitle></div>
      <CardTab width="w-[257.5px]" size="text-[13.85px]">Futures_Binance_BTC_USDT:swap</CardTab>
      <div className="mt-[11.5px] relative">
        <CandleChart />
        <div className="absolute left-[1560px] top-[13px] w-[89px] h-[23px] flex items-center bg-white border border-[#eeeeee] rounded-[3px] shadow-[0_1px_3px_rgba(0,0,0,0.06)] text-[12px] text-[#888]">
          <span className="w-[65px] pl-[7px]">Indicator</span>
          <span className="flex-1 h-full border-l border-[#eeeeee] flex items-center justify-center"><ExpandIcon /></span>
        </div>
      </div>
    </section>

    {/* Status info */}
    <section className="mt-[20px] h-[277px] bg-white">
      <div className="flex items-center justify-between pt-[15px] pr-[17px]">
        <SectionTitle left="pl-[14px]" gap="gap-[12.5px]">Status info</SectionTitle>
        <ExpandIcon color="#d5d5d5" />
      </div>
      <div className="flex items-end justify-between mt-[24px] pl-[14px] pr-[19px] h-[42.7px]">
        <div className="flex h-full text-[14px]">
          <span className="w-[77.5px] flex items-center justify-center border-t-2 border-t-[#10b083] border-l border-[#eeeeee] text-[#00a870]">Asset</span>
          <span className="w-[121px] flex items-center justify-center border-t border-l border-[#eeeeee] text-[#888]">Open orders</span>
          <span className="w-[147px] flex items-center justify-center border-t border-x border-[#eeeeee] text-[#888]">Schedule orders</span>
        </div>
        <div className="flex gap-[12px] pb-[17px] text-[#555]">
          <CloudUpload size={17} strokeWidth={1.4} />
          <Settings size={17} strokeWidth={1.4} />
        </div>
      </div>
      <table className="ml-[14px] w-[1719px] table-fixed border-collapse text-[12px]">
        <colgroup>
          {STATUS_COLS.map((c) => <col key={c} className={c} />)}
        </colgroup>
        <thead>
          <tr className="h-[39px] bg-[#fafafa] text-[14px]">
            {['Futures_Binance', 'FreeUSDT', 'FrozenUSDT', 'Update'].map((h) => (
              <th key={h} className="border border-[#eeeeee] px-[8px] text-left font-medium text-[#444]">{h}</th>
            ))}
          </tr>
        </thead>
        <tbody>
          {STATUS_ROWS.map((row, i) => (
            <tr key={row[0]} className="h-[39px]">
              <td className={`border border-[#eeeeee] px-[8px] ${i === 0 ? 'text-[#3b96ef]' : i === 2 ? 'text-[#e0282e]' : ''}`}>{row[0]}</td>
              <td className={`border border-[#eeeeee] px-[8px] ${i === 2 ? 'text-[#f5222d]' : ''}`}>{row[1]}</td>
              <td className="border border-[#eeeeee] px-[8px]">{row[2]}</td>
              <td className="border border-[#eeeeee] px-[8px]">{row[3]}</td>
            </tr>
          ))}
        </tbody>
      </table>
    </section>

    {/* Earnings overview */}
    <section className="mt-[20px] h-[677px] bg-white">
      <div className="pt-[19px]"><SectionTitle>Earnings overview</SectionTitle></div>
      <CardTab width="w-[220px]">Futures_Binance_BTC_USDT</CardTab>
      <div className="flex justify-between pl-[324px] pr-[32px] pt-[17px] h-[59px] font-['DejaVu_Sans',sans-serif]">
        <p className="text-[13.53px] leading-[42px] text-[#666] whitespace-nowrap h-[42px]">
          Initial net value : 50000 Total profit: 2.932 %, Annualized returns (365 days) : 152.874 %, Sharpe ratio : 0.206, Volatility : 7.260 %, Maximum drawdown : 5.833 %
        </p>
        <div className="flex items-center gap-[13px] h-[42px]">
          <span className="text-[12px] text-[#333]">FullScreen</span>
          <span className="flex flex-col gap-[2px] w-[16px]">
            <i className="h-[3px] bg-[#666]" />
            <i className="h-[3px] bg-[#666]" />
            <i className="h-[3px] bg-[#666]" />
          </span>
        </div>
      </div>
      <div className="flex items-center gap-[5px] pl-[28px] h-[22px] font-['DejaVu_Sans',sans-serif] text-[11px]">
        <span className="w-[33px] text-[#666]">Zoom</span>
        {ZOOMS.map(([label, off]) => (
          <span key={label} className={`w-[32px] h-[22px] rounded-[2px] bg-[#f7f7f7] flex items-center justify-center ${off ? 'text-[#cccccc]' : 'text-[#333]'}`}>{label}</span>
        ))}
        <span className="w-[32px] h-[22px] rounded-[2px] bg-[#e6ebf5] flex items-center justify-center font-bold text-black">All</span>
      </div>
      <EarningsChart />
    </section>
  </div>
)

export default App
